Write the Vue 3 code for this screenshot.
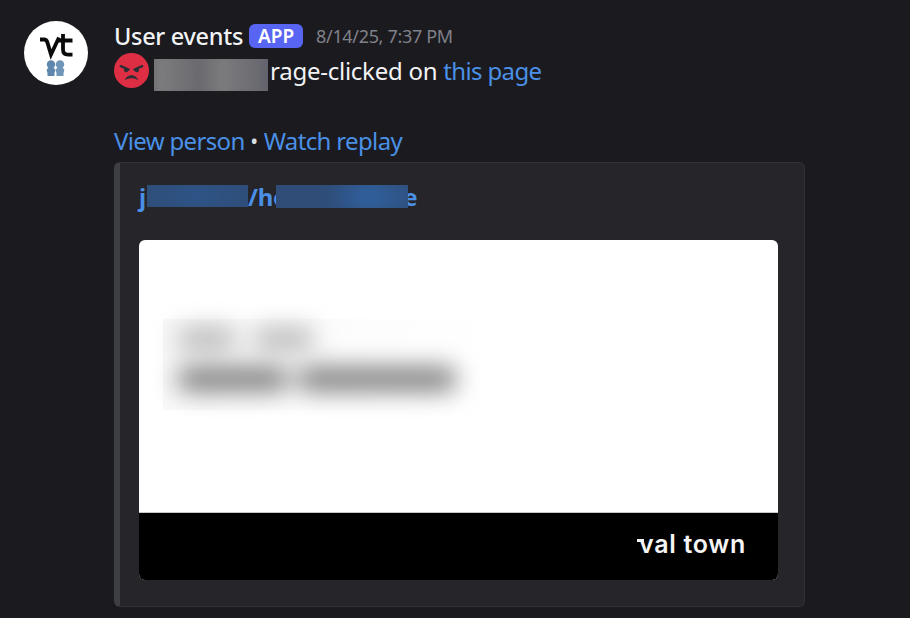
<script setup>
const firstRow = [60, 62]
const secondRow = [112, 160]
</script>

<template>
  <div class="message">
    <div class="avatar">
      <svg viewBox="0 0 64 64" width="64" height="64">
        <circle cx="32" cy="32" r="32" fill="#fff" />
        <path d="M16 18.500h4c1.800 0 2.800 1 3.300 2.600l3.700 12.400 8-17" fill="none" stroke="#0a0a0a" stroke-width="3.800" />
        <path d="M39 13v15.500c0 3.500 1.600 5.100 5 5.100h4.500M34 19.500h14.500" fill="none" stroke="#0a0a0a" stroke-width="3.800" />
        <circle cx="27" cy="43.500" r="4.200" fill="#5f87ad" />
        <path d="M23.500 55v-2.500c0-1.800-1-2.500-.8-3.800.3-1.500 2-2 4.300-2s4 .5 4.300 2c.2 1.300-.8 2-.8 3.800V55z" fill="#5f87ad" />
        <circle cx="36" cy="43.500" r="4.200" fill="#6f95b8" />
        <path d="M32.500 55v-2.500c0-1.800-1-2.500-.8-3.800.3-1.500 2-2 4.300-2s4 .5 4.300 2c.2 1.300-.8 2-.8 3.800V55z" fill="#6f95b8" />
      </svg>
    </div>

    <div class="body">
      <div class="header">
        <span class="username">User events</span>
        <span class="app-tag">APP</span>
        <span class="timestamp">8/14/25, 7:37 PM</span>
      </div>

      <div class="line">
        <svg class="emoji" viewBox="0 0 36 36" width="35" height="35">
          <circle cx="18" cy="18" r="18" fill="#dd2e44" />
          <path d="M7 13.500l8 3.500M29 13.500l-8 3.500" stroke="#292f33" stroke-width="2.400" stroke-linecap="round" />
          <circle cx="12.500" cy="17.500" r="2.300" fill="#292f33" />
          <circle cx="23.500" cy="17.500" r="2.300" fill="#292f33" />
          <path d="M11 28c1.500-3.500 4-5 7-5s5.500 1.500 7 5c-2.500-1.500-4.500-2-7-2s-4.500.5-7 2z" fill="#292f33" />
        </svg>
        <span class="name-blur"><i></i></span>
        <span>rage-clicked on <a class="link">this page</a></span>
      </div>

      <div class="links">
        <a class="link">View person</a>
        <span class="dot">•</span>
        <a class="link">Watch replay</a>
      </div>

      <div class="embed">
        <div class="embed-title">
          <span>j</span>
          <span class="title-blur first"><i></i></span>
          <span>/he</span>
          <span class="title-blur second"><i></i></span>
          <span>e</span>
        </div>

        <div class="preview">
          <div class="preview-top">
            <div class="text-blur">
              <div class="blur-row short">
                <b v-for="w in firstRow" :key="w" :style="{ width: w + 'px' }"></b>
              </div>
              <div class="blur-row">
                <b v-for="w in secondRow" :key="w" :style="{ width: w + 'px' }"></b>
              </div>
            </div>
          </div>
          <div class="preview-bottom">
            <span class="wordmark">val town</span>
          </div>
        </div>
      </div>
    </div>
  </div>
</template>

<style>
html,
body {
  margin: 0;
  background: #1a1a1f;
  overflow: hidden;
}
</style>

<style scoped>
.message {
  display: flex;
  gap: 26px;
  padding: 21px 0 0 24px;
  height: 597px;
  overflow: hidden;
  color: #f2f3f5;
  font-family: "Noto Sans", "Liberation Sans", sans-serif;
}

.avatar {
  width: 64px;
  height: 64px;
  flex: none;
}

.avatar svg,
.emoji {
  display: block;
}

.body {
  width: 691px;
}

.header {
  display: flex;
  align-items: center;
  height: 30px;
}

.username {
  font-size: 23.500px;
  font-weight: 500;
  color: #f2f3f5;
  letter-spacing: -0.3px;
}

.app-tag {
  margin-left: 6px;
  width: 54px;
  height: 24px;
  border-radius: 6px;
  background: #5865f2;
  color: #fff;
  font-size: 19px;
  font-weight: 600;
  line-height: 24px;
  text-align: center;
}

.timestamp {
  margin-left: 13px;
  font-size: 18px;
  color: #818189;
  letter-spacing: -0.33px;
}

.line {
  display: flex;
  align-items: center;
  height: 36px;
  margin-top: 1px;
  font-size: 24px;
  letter-spacing: -0.25px;
}

.emoji {
  flex: none;
}

.name-blur {
  display: block;
  flex: none;
  width: 114px;
  height: 32px;
  margin: 10px 2px 0 5px;
  overflow: hidden;
  background: #67676b;
}

.name-blur i {
  display: block;
  width: 100%;
  height: 100%;
  background: linear-gradient(90deg, #5a5a5e 0%, #7d7d80 12%, #6a6a6e 42%, #7c7c7f 58%, #6a6a70 85%, #56566a 100%);
  filter: blur(3px);
  transform: scale(1.2);
}

.link {
  color: #4a90e6;
  letter-spacing: -0.65px;
}

.links {
  display: flex;
  align-items: center;
  height: 36px;
  margin-top: 35px;
  font-size: 24px;
  line-height: 36px;
  white-space: nowrap;
}

.dot {
  width: 19px;
  font-size: 21px;
  text-align: center;
  color: #dcdde0;
}

.embed {
  box-sizing: border-box;
  height: 445px;
  margin-top: 3px;
  padding: 18px 26px 26px 19px;
  background: #25252a;
  border: 1px solid #303036;
  border-left: 6px solid #3e3e45;
  border-radius: 6px;
}

.embed-title {
  display: flex;
  align-items: center;
  height: 30px;
  font-size: 24px;
  font-weight: 700;
  color: #4a90e6;
  letter-spacing: -0.2px;
}

.title-blur {
  display: block;
  height: 22px;
  overflow: hidden;
}

.title-blur i {
  display: block;
  height: 100%;
  filter: blur(5px);
  transform: scale(1.3);
}

.title-blur.first {
  width: 101px;
  margin-left: 1px;
  background: #2f4d77;
}

.title-blur.first i {
  background: linear-gradient(90deg, #2f4d77, #2e5486 50%, #2f4d77);
}

.title-blur.second {
  position: relative;
  z-index: 1;
  width: 132px;
  height: 23px;
  margin: 0 -5px 0 -11px;
  background: #2f4d77;
}

.title-blur.second i {
  background: linear-gradient(90deg, #2f4d77, #2f4d77 40%, #30609e 65%, #2f4d77);
}

.preview {
  width: 639px;
  height: 340px;
  margin-top: 29px;
  border-radius: 6px;
  overflow: hidden;
  background: #fff;
}

.preview-top {
  box-sizing: border-box;
  height: 273px;
  padding: 79px 0 0 24px;
  border-bottom: 1px solid #c8c8c8;
}

.text-blur {
  box-sizing: border-box;
  display: flex;
  flex-direction: column;
  gap: 16px;
  width: 310px;
  height: 91px;
  padding: 8px 0 0 14px;
  background: linear-gradient(120deg, #f8f8f8, #fdfdfd 60%, #fff);
}

.blur-row {
  display: flex;
  gap: 8px;
  width: 320px;
  filter: blur(12px);
}

.blur-row.short {
  gap: 16px;
  opacity: 0.5;
}

.blur-row b {
  display: block;
  flex: none;
  height: 24px;
  background: #7c7c7c;
  border-radius: 12px;
}

.preview-bottom {
  box-sizing: border-box;
  display: flex;
  align-items: center;
  justify-content: flex-end;
  height: 67px;
  padding: 0 32px 6px 0;
  background: #000;
}

.wordmark {
  position: relative;
  font-family: "Inter", "Liberation Sans", sans-serif;
  font-size: 25px;
  font-weight: 600;
  letter-spacing: 0.7px;
  color: #f4f4f4;
}

.wordmark::before {
  content: "";
  position: absolute;
  left: -2px;
  top: 10px;
  width: 7px;
  height: 3px;
  background: #f4f4f4;
}
</style>
